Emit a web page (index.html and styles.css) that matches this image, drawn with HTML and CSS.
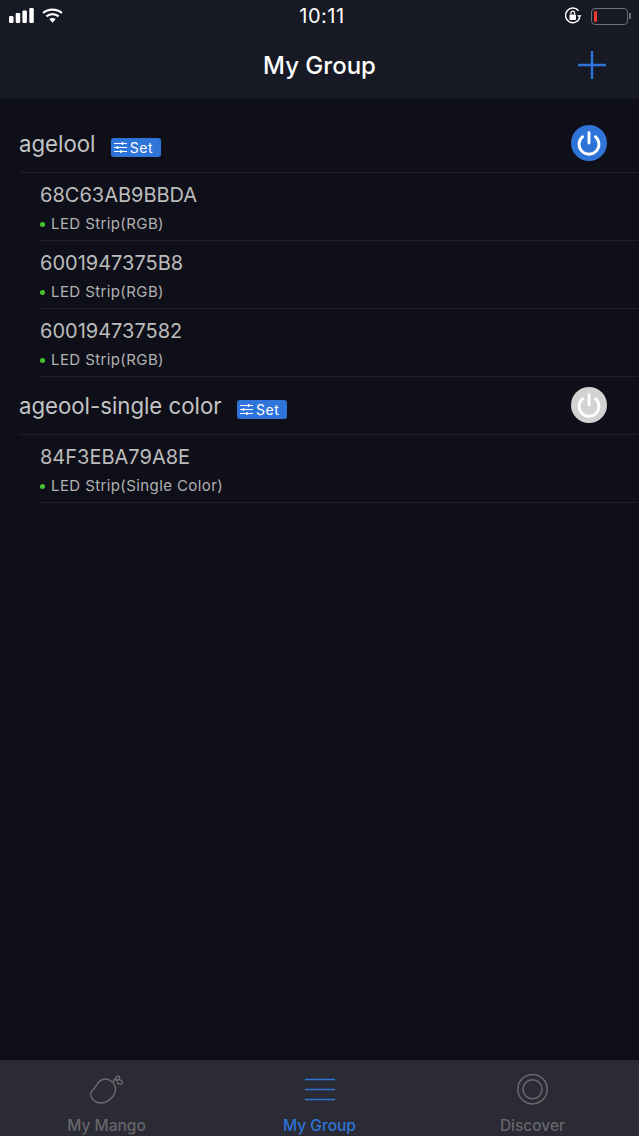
FILE: index.html
```html
<!DOCTYPE html>
<html>
<head>
<meta charset="utf-8">
<title>My Group</title>
<link rel="stylesheet" href="styles.css">
</head>
<body>
<div class="app">
	<div class="top">
		<div class="status">
			<div class="status-left">
				<svg width="25" height="15" viewBox="0 0 25 15"><rect x="0" y="8" width="4.500" height="7" rx="1.200" fill="#fff"/><rect x="6.700" y="5" width="4.500" height="10" rx="1.200" fill="#fff"/><rect x="13.400" y="2.500" width="4.500" height="12.500" rx="1.200" fill="#fff"/><rect x="20.300" y="0" width="4.500" height="15" rx="1.200" fill="#fff"/></svg>
				<svg width="21" height="15" viewBox="0 0 21 15"><path d="M1 5C6.500 .4 14.500 .4 20 5M4.400 8.300C8 5.300 13 5.300 16.600 8.300" fill="none" stroke="#fff" stroke-width="2.200"/><path d="M7.300 11C9.300 9.500 11.700 9.500 13.700 11L10.500 14.800Z" fill="#fff"/></svg>
			</div>
			<div class="clock">10:11</div>
			<div class="status-right">
				<svg width="18" height="18" viewBox="0 0 18 18"><path d="M15.800 10.500A7.300 7.300 0 1 1 14.500 3.800" fill="none" stroke="#fff" stroke-width="1.500"/><path d="M13.200 8.200h4.400l-2.200 2.800z" fill="#fff"/><rect x="5.500" y="7.500" width="6.500" height="5.500" rx="1" fill="#fff"/><path d="M6.900 7.500V6a1.850 1.850 0 0 1 3.700 0v1.500" fill="none" stroke="#fff" stroke-width="1.200"/></svg>
				<div class="battery"><div class="battery-level"></div></div>
				<div class="battery-tip"></div>
			</div>
		</div>
		<div class="nav">
			<div class="nav-title">My Group</div>
			<svg class="nav-add" width="28" height="28" viewBox="0 0 28 28"><path d="M14 0V28M0 14H28" stroke="#2f74d8" stroke-width="2.400"/></svg>
		</div>
	</div>

	<div class="main">
		<div class="group first">
			<div class="group-name">agelool</div>
			<div class="set-btn">
				<svg width="13" height="11" viewBox="0 0 13 11"><path d="M0 1.500H13M0 5.500H13M0 9.500H13" stroke="#fff" stroke-width="1.100"/><path d="M8.500 0V3M3.500 4V7M7 8V11" stroke="#fff" stroke-width="1.400"/></svg>
				<span>Set</span>
			</div>
			<div class="power on">
				<svg width="38" height="38" viewBox="0 0 38 38"><path d="M12.300 12.300A10.500 10.500 0 1 0 25.700 12.300M19 8V19" fill="none" stroke="#fff" stroke-width="3" stroke-linecap="round"/></svg>
			</div>
		</div>
		<div class="device">
			<div class="device-id">68C63AB9BBDA</div>
			<div class="device-type"><i class="dot"></i>LED Strip(RGB)</div>
		</div>
		<div class="device">
			<div class="device-id">6001947375B8</div>
			<div class="device-type"><i class="dot"></i>LED Strip(RGB)</div>
		</div>
		<div class="device">
			<div class="device-id">600194737582</div>
			<div class="device-type"><i class="dot"></i>LED Strip(RGB)</div>
		</div>

		<div class="group">
			<div class="group-name">ageool-single color</div>
			<div class="set-btn">
				<svg width="13" height="11" viewBox="0 0 13 11"><path d="M0 1.500H13M0 5.500H13M0 9.500H13" stroke="#fff" stroke-width="1.100"/><path d="M8.500 0V3M3.500 4V7M7 8V11" stroke="#fff" stroke-width="1.400"/></svg>
				<span>Set</span>
			</div>
			<div class="power off">
				<svg width="38" height="38" viewBox="0 0 38 38"><path d="M12.300 12.300A10.500 10.500 0 1 0 25.700 12.300M19 8V19" fill="none" stroke="#fff" stroke-width="3" stroke-linecap="round"/></svg>
			</div>
		</div>
		<div class="device">
			<div class="device-id">84F3EBA79A8E</div>
			<div class="device-type"><i class="dot"></i>LED Strip(Single Color)</div>
		</div>
	</div>

	<div class="tabs">
		<div class="tab">
			<svg width="36" height="32" viewBox="0 0 36 32"><path d="M17.500 5C12 4.500 9 8 7 12C5 16 1.500 17 1.500 20C2 25 6 29 11.500 29C19 29 26.500 22 26.500 15C26.500 11 23 6 17.500 5Z" fill="none" stroke="#6a6a6e" stroke-width="1.400"/><path d="M24 8.500C24.500 6 26 4.500 28 2.500C29.500 1.500 31 2.500 30.500 4.500C30 6.500 27.500 7 26.500 6C29 5 33.500 6 33.500 8.500C33.500 10.500 29.500 11 28 8" fill="none" stroke="#6a6a6e" stroke-width="1.400"/></svg>
			<div class="tab-label">My Mango</div>
		</div>
		<div class="tab active">
			<svg width="32" height="32" viewBox="0 0 32 32"><path d="M1 5.500H31M1 15.500H31M1 25.500H31" stroke="#2f74d8" stroke-width="1.400"/></svg>
			<div class="tab-label">My Group</div>
		</div>
		<div class="tab">
			<svg width="32" height="32" viewBox="0 0 32 32"><circle cx="15.500" cy="15.200" r="14.700" fill="none" stroke="#6a6a6e" stroke-width="1.500"/><circle cx="15.500" cy="15.200" r="9.500" fill="none" stroke="#6a6a6e" stroke-width="1.500"/></svg>
			<div class="tab-label">Discover</div>
		</div>
	</div>
</div>
</body>
</html>
```

FILE: styles.css
```css
*{margin:0;padding:0;box-sizing:border-box;}
html,body{height:100%;}
body{background:#0e0f18;font-family:Inter,"Liberation Sans",sans-serif;overflow:hidden;}
.app{height:1136px;display:flex;flex-direction:column;}

/* top bar */
.top{height:99px;background:#171a24;flex:none;}
.status{height:32px;padding:7px 8px 0 9px;display:flex;justify-content:space-between;align-items:flex-start;position:relative;}
.status-left{display:flex;gap:8px;margin-top:1px;}
.clock{position:absolute;left:0;right:0;top:5px;text-align:center;padding-left:5px;color:#fff;font-size:20px;letter-spacing:.5px;line-height:22px;}
.status-right{display:flex;align-items:center;}
.battery{width:37px;height:17px;margin-left:9px;border:1.500px solid #6d7078;border-radius:4px;padding:2px 2px;}
.battery-level{width:3px;height:100%;background:#e8392e;border-radius:1px;}
.battery-tip{width:2px;height:6px;background:#6d7078;margin-left:1px;}
.nav{height:67px;padding:0 33px 1px 0;display:flex;align-items:center;justify-content:flex-end;position:relative;}
.nav-title{position:absolute;left:0;right:0;top:19px;text-align:center;color:#fff;font-size:24px;font-weight:500;line-height:30px;}

/* list */
.main{flex:1;padding-top:17px;}
.group{height:58px;margin-left:19px;padding-right:32px;display:flex;align-items:center;border-bottom:1px solid #1f2029;}
.group.first{height:57px;}
.group-name{color:#c4c4c4;font-size:22.200px;line-height:28px;}
.set-btn{width:50px;height:19px;margin-left:15.500px;margin-top:7px;background:#2f74d8;border-radius:3px;display:flex;align-items:center;gap:3px;padding-left:3px;color:#fff;font-size:14px;letter-spacing:.5px;}
.power{margin-left:auto;margin-top:-2px;width:36px;height:36px;border-radius:50%;display:flex;align-items:center;justify-content:center;}
.first .power{margin-top:-3px;}
.power.on{background:#2f74d8;}
.power.off{background:#d3d3d3;}
.device{height:68px;margin-left:40px;border-bottom:1px solid #1f2029;padding-top:9px;}
.device-id{color:#bcbcbc;font-size:20px;line-height:26px;}
.device-type{color:#b2b2b2;font-size:15px;letter-spacing:.4px;line-height:20px;margin-top:6px;display:flex;align-items:center;}
.dot{width:5px;height:5px;border-radius:50%;background:#45c42f;margin-right:6px;}

/* tab bar */
.tabs{height:76px;flex:none;background:#2a2b34;display:grid;grid-template-columns:repeat(3,1fr);padding-top:13px;border-top:1px solid #26272f;}
.tab{display:flex;flex-direction:column;align-items:center;color:#66666b;}
.tab-label{font-size:15.500px;line-height:20px;margin-top:10px;font-weight:500;}
.tab.active{color:#2f74d8;}
```
